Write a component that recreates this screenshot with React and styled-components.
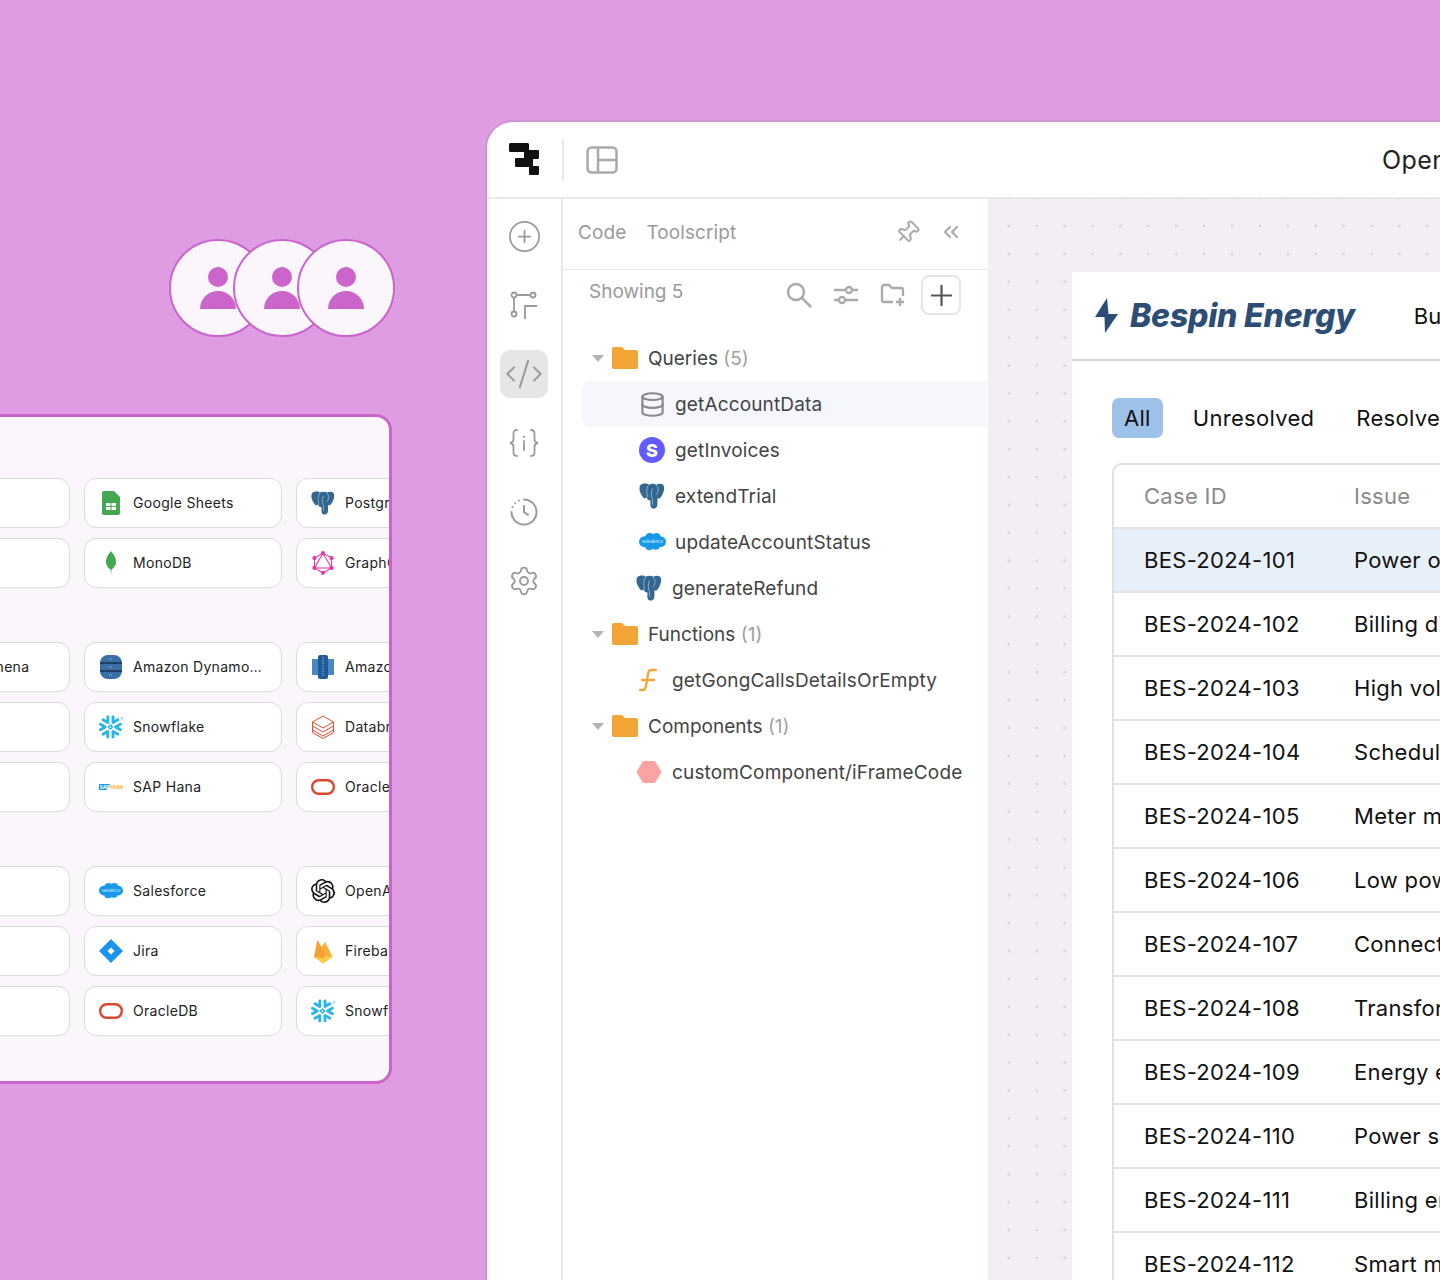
import React from 'react'
import styled, {createGlobalStyle} from 'styled-components'
import {CirclePlus, CodeXml, Database, Pin, ChevronsLeft, Plus, Settings} from 'lucide-react'
import {SiGraphql, SiSnowflake, SiOpenai} from 'react-icons/si'

const GlobalStyle = createGlobalStyle`
  html, body {
    margin: 0;
    padding: 0;
    background: #de9de3;
    font-family: Inter, "Noto Sans", sans-serif;
  }
`

const Page = styled.div`
  display: flex;
  width: 1440px;
  height: 1280px;
  overflow: hidden;
`

const LeftColumn = styled.div`
  flex: none;
  width: 485px;
  padding-top: 239px;
  box-sizing: border-box;
`

const Avatars = styled.div`
  display: flex;
  margin-left: 169px;
`

const Avatar = styled.div`
  flex: none;
  display: flex;
  align-items: center;
  justify-content: center;
  box-sizing: border-box;
  width: 98px;
  height: 98px;
  border: 2px solid #cb65cc;
  border-radius: 50%;
  background: #fbf5fc;
  & + & {
    margin-left: -34px;
  }
`

const Panel = styled.div`
  box-sizing: border-box;
  width: 534px;
  height: 670px;
  margin-top: 77px;
  margin-left: -142px;
  padding: 61px 0 0 11px;
  border: 3px solid #cb65cc;
  border-radius: 16px;
  background: #fbf5fc;
  overflow: hidden;
`

const CardGroup = styled.div`
  display: grid;
  grid-template-columns: repeat(3, 198px);
  gap: 10px 14px;
  margin-bottom: 54px;
`

const Card = styled.div`
  box-sizing: border-box;
  display: flex;
  align-items: center;
  height: 50px;
  padding-left: 13px;
  border: 1px solid #dcdadc;
  border-radius: 12px;
  background: #fff;
  white-space: nowrap;
`

const CardIcon = styled.span`
  flex: none;
  display: flex;
  align-items: center;
  justify-content: center;
  width: 26px;
  height: 26px;
  margin-right: 9px;
`

const CardLabel = styled.span`
  overflow: hidden;
  text-overflow: ellipsis;
  padding: 0 18px 1px 0;
  font-size: 14px;
  letter-spacing: 0.3px;
  color: #222;
`

const AppWindow = styled.div`
  flex: none;
  box-sizing: border-box;
  width: 1000px;
  height: 1170px;
  margin-top: 120px;
  border: 2px solid #cf93d3;
  border-bottom: none;
  border-radius: 28px 0 0 0;
  background: #fff;
  overflow: hidden;
`

const TopBar = styled.div`
  box-sizing: border-box;
  display: flex;
  align-items: center;
  height: 77px;
  padding-left: 22px;
  border-bottom: 2px solid #e8e8e8;
  & > svg {
    flex: none;
  }
`

const TopDivider = styled.div`
  flex: none;
  width: 2px;
  height: 42px;
  margin: 0 22px;
  background: #e8e8e8;
`

const PageTitle = styled.div`
  flex: none;
  margin-left: 764px;
  font-size: 25px;
  letter-spacing: 0.4px;
  color: #222;
  white-space: nowrap;
`

const Body = styled.div`
  display: flex;
  height: 1090px;
`

const SideBar = styled.div`
  flex: none;
  box-sizing: border-box;
  display: flex;
  flex-direction: column;
  align-items: center;
  gap: 21px;
  width: 76px;
  padding-top: 13px;
  border-right: 2px solid #e8e8e8;
`

const SideButton = styled.div`
  display: flex;
  align-items: center;
  justify-content: center;
  width: 48px;
  height: 48px;
  border-radius: 10px;
  color: #9a9a9a;
  background: ${props => (props.$active ? '#e6e6e6' : 'transparent')};
`

const CodePanel = styled.div`
  flex: none;
  width: 425px;
`

const TabsRow = styled.div`
  box-sizing: border-box;
  display: flex;
  align-items: center;
  gap: 20px;
  height: 71px;
  padding: 0 25px 4px 15px;
  border-bottom: 1px solid #e8e8e8;
`

const PanelTab = styled.span`
  font-size: 19px;
  letter-spacing: 0.1px;
  color: #9a9a9a;
`

const TabTools = styled.div`
  display: flex;
  align-items: center;
  gap: 19px;
  margin-left: auto;
  color: #aaa;
`

const FilterRow = styled.div`
  box-sizing: border-box;
  display: flex;
  align-items: flex-start;
  height: 65px;
  padding: 5px 27px 0 26px;
`

const ShowingLabel = styled.span`
  font-size: 19px;
  line-height: 34px;
  color: #9a9a9a;
`

const FilterTools = styled.div`
  display: flex;
  align-items: center;
  gap: 21px;
  margin-left: auto;
  color: #aaa;
`

const ToolCell = styled.span`
  display: flex;
  align-items: center;
  justify-content: center;
  width: 26px;
  height: 40px;
`

const AddButton = styled.span`
  box-sizing: border-box;
  display: flex;
  align-items: center;
  justify-content: center;
  width: 40px;
  height: 40px;
  margin-left: -6px;
  border: 2px solid #e6e6e6;
  border-radius: 8px;
  color: #555;
`

const Tree = styled.div`
  padding: 0 1px 0 19px;
`

const TreeRow = styled.div`
  display: flex;
  align-items: center;
  height: 46px;
  padding-left: ${props => props.$indent}px;
  border-radius: 8px 0 0 8px;
  background: ${props => (props.$selected ? '#f5f7fd' : 'transparent')};
  white-space: nowrap;
`

const Caret = styled.span`
  width: 0;
  height: 0;
  margin-right: 8px;
  border-left: 6px solid transparent;
  border-right: 6px solid transparent;
  border-top: 7px solid #b4b4b4;
`

const TreeIcon = styled.span`
  flex: none;
  display: flex;
  align-items: center;
  justify-content: center;
  width: 28px;
  height: 28px;
  margin-right: 9px;
`

const FolderLabel = styled.span`
  margin-left: 10px;
  font-size: 19px;
  color: #444;
`

const Count = styled.span`
  color: #a0a0a0;
`

const ItemLabel = styled.span`
  font-size: 19px;
  letter-spacing: 0.15px;
  color: #444;
`

const StripeBadge = styled.span`
  display: flex;
  align-items: center;
  justify-content: center;
  width: 26px;
  height: 26px;
  border-radius: 50%;
  background: #635bff;
  color: #fff;
  font-size: 18px;
  font-weight: 800;
`

const Canvas = styled.div`
  flex: 1;
  padding: 73px 0 0 84px;
  background-color: #f3eef4;
  background-image: radial-gradient(circle, #d6d2d7 1.5px, transparent 1.6px);
  background-size: 27.9px 27.9px;
  background-position: 7px 13px;
`

const AppCard = styled.div`
  height: 100%;
  background: #fff;
`

const AppHeader = styled.div`
  box-sizing: border-box;
  display: flex;
  align-items: center;
  height: 89px;
  padding-left: 23px;
  border-bottom: 2px solid #cfdae6;
  white-space: nowrap;
`

const BrandName = styled.span`
  margin-left: 11px;
  font-size: 32px;
  font-weight: 800;
  font-style: italic;
  letter-spacing: -0.2px;
  color: #2c4e76;
`

const NavItem = styled.span`
  margin-left: 59px;
  font-size: 22px;
  color: #111;
`

const FilterTabs = styled.div`
  display: flex;
  gap: 18px;
  padding: 37px 0 0 40px;
  white-space: nowrap;
`

const FilterTab = styled.span`
  display: flex;
  align-items: center;
  height: 40px;
  padding: 0 12px;
  border-radius: 7px;
  background: ${props => (props.$active ? '#9ec1ea' : 'transparent')};
  font-size: 22px;
  letter-spacing: 0.3px;
  color: #111;
`

const Table = styled.div`
  margin: 25px 0 0 40px;
  border: 2px solid #e0e0e0;
  border-right: none;
  border-bottom: none;
  border-radius: 10px 0 0 0;
`

const TableRow = styled.div`
  box-sizing: border-box;
  display: grid;
  grid-template-columns: 210px 1fr;
  align-items: center;
  height: 64px;
  padding-left: 30px;
  border-bottom: 2px solid #e3e3e3;
  background: ${props => (props.$selected ? '#e7eff8' : 'transparent')};
  font-size: 22px;
  letter-spacing: 0.3px;
  color: ${props => (props.$head ? '#8a8a8a' : '#111')};
  white-space: nowrap;
`

const UserIcon = () => (
  <svg width="36" height="42" viewBox="0 0 36 42">
    <circle cx="18" cy="10" r="10" fill="#cb65cc" />
    <path d="M0 42a18 18 0 0 1 36 0z" fill="#cb65cc" />
  </svg>
)

const SheetsIcon = () => (
  <svg width="18" height="24" viewBox="0 0 18 24">
    <path d="M2 0h10l6 6v16a2 2 0 0 1-2 2H2a2 2 0 0 1-2-2V2a2 2 0 0 1 2-2z" fill="#43a84f" />
    <path d="M4 12h10v7H4z" fill="#fff" />
    <path d="M9 12v7M4 15.5h10" stroke="#43a84f" />
  </svg>
)

const LeafIcon = () => (
  <svg width="12" height="24" viewBox="0 0 12 24">
    <path d="M6 0c2 3 5 6 5 11 0 4-3 6.500-4.500 7.500L6 24l-.5-5.500C4 17.500 1 15 1 11c0-5 3-8 5-11z" fill="#43a84f" />
  </svg>
)

const DynamoIcon = () => (
  <svg width="24" height="24" viewBox="0 0 24 24">
    <rect x="1" y="0" width="22" height="24" rx="8" fill="#3a6ea5" />
    <path d="M1 8h22M1 16h22" stroke="#1f3f66" strokeWidth="2" />
    <path d="M10 4h4M10 12h4M10 20h4" stroke="#7fa8d3" strokeWidth="1.500" strokeDasharray="1 1" />
  </svg>
)

const RedshiftIcon = () => (
  <svg width="24" height="24" viewBox="0 0 24 24">
    <rect x="1" y="4" width="6" height="16" fill="#4a86c0" />
    <rect x="17" y="4" width="6" height="16" fill="#4a86c0" />
    <rect x="7" y="0" width="10" height="24" rx="2" fill="#205b99" />
    <path d="M12 2v20" stroke="#6fa3d6" strokeWidth="1.500" strokeDasharray="1 1" />
  </svg>
)

const DatabricksIcon = () => (
  <svg width="24" height="24" viewBox="0 0 24 24" fill="none" stroke="#e8492f">
    <path d="M12 1l10.500 6L12 13 1.500 7z" />
    <path d="M1.500 7v4L12 17l10.500-6V7" />
    <path d="M1.500 11v4L12 21l10.500-6v-4" />
    <path d="M1.500 15v2.500L12 23.500l10.500-6V15" />
  </svg>
)

const OracleIcon = () => (
  <svg width="24" height="16" viewBox="0 0 24 16">
    <rect x="1.200" y="1.200" width="21.600" height="13.600" rx="6.500" fill="none" stroke="#d9472f" strokeWidth="2.400" />
  </svg>
)

const SapIcon = () => (
  <svg width="24" height="8" viewBox="0 0 24 8">
    <path d="M0 1h11L7.500 7H0z" fill="#1798e8" />
    <text x="0.800" y="5.800" fontSize="4.500" fontWeight="700" fill="#fff" fontFamily="Inter, sans-serif">SAP</text>
    <text x="10" y="6" fontSize="4.800" fontWeight="700" fill="#f7b733" fontFamily="Inter, sans-serif">HANA</text>
  </svg>
)

const JiraIcon = () => (
  <svg width="24" height="24" viewBox="0 0 24 24">
    <path d="M12 0l12 12-12 12L0 12z" fill="#1a95ee" />
    <path d="M12 8.500l3.500 3.500-3.500 3.500L8.500 12z" fill="#fff" />
  </svg>
)

const FirebaseIcon = () => (
  <svg width="20" height="25" viewBox="0 0 20 25">
    <path d="M1 18L4.500 1l4 7L12 3l7.500 15-9.500 6.500z" fill="#ffc843" />
    <path d="M1 18L4.500 1l4 7 4.500 8-3 3z" fill="#f2a035" />
    <path d="M12 3L8.500 8l4.500 8 6.500 2z" fill="#f7b03c" />
  </svg>
)

const SalesforceIcon = ({size = 24}) => (
  <svg width={size} height={size * 0.72} viewBox="0 0 25 18">
    <g fill="#1798e8">
      <circle cx="10" cy="5.500" r="4.500" />
      <circle cx="16" cy="5" r="4" />
      <circle cx="20" cy="9" r="5" />
      <circle cx="5" cy="9" r="5" />
      <circle cx="9.500" cy="13" r="4" />
      <circle cx="15.500" cy="12.500" r="4" />
    </g>
    <text x="12.500" y="10.500" fontSize="4" textAnchor="middle" fill="#d8efff" fontFamily="Inter, sans-serif">salesforce</text>
  </svg>
)

const SnowflakeIcon = () => <SiSnowflake size={24} color="#29b5e8" />

const PostgresIcon = ({size = 24}) => (
  <svg width={size} height={size} viewBox="0 0 24 24">
    <path
      d="M3 1c3-1 5 0 6 .5 2-1 5-1 7 0 2-1 6-1.500 7 1.500 1 4-2 10-4.500 11.500L17 14v6c0 3-3 4-4.500 3.500-2-.5-2-2.500-2-4.500v-3c-2 .5-3-1-3.500-3-1 2-2.500 1.500-3.500 0C1.500 10 0 7 .5 4 .7 2 2 1.200 3 1z"
      fill="#336791"
    />
    <path d="M8.500 2C6.500 6 7 10 8 13M16 2c2.500 3 2 7-.5 9M12.500 5c-1.500 3-1.500 8 0 10v5" fill="none" stroke="#d5e3ef" strokeWidth="0.500" />
  </svg>
)

const cardGroups = [
  [
    {},
    {label: 'Google Sheets', icon: <SheetsIcon />},
    {label: 'Postgres', icon: <PostgresIcon />},
    {},
    {label: 'MonoDB', icon: <LeafIcon />},
    {label: 'GraphQL', icon: <SiGraphql size={24} color="#e535ab" />},
  ],
  [
    {label: 'Amazon Athena'},
    {label: 'Amazon DynamoDB', icon: <DynamoIcon />},
    {label: 'Amazon Redshift', icon: <RedshiftIcon />},
    {},
    {label: 'Snowflake', icon: <SnowflakeIcon />},
    {label: 'Databricks', icon: <DatabricksIcon />},
    {},
    {label: 'SAP Hana', icon: <SapIcon />},
    {label: 'Oracle', icon: <OracleIcon />},
  ],
  [
    {},
    {label: 'Salesforce', icon: <SalesforceIcon />},
    {label: 'OpenAI', icon: <SiOpenai size={24} color="#111" />},
    {},
    {label: 'Jira', icon: <JiraIcon />},
    {label: 'Firebase', icon: <FirebaseIcon />},
    {},
    {label: 'OracleDB', icon: <OracleIcon />},
    {label: 'Snowflake', icon: <SnowflakeIcon />},
  ],
]

const RetoolLogo = () => (
  <svg width="31" height="33" viewBox="0 0 31 33" fill="#111">
    <rect x="0" y="0" width="20" height="9" rx="1.500" />
    <rect x="15" y="7" width="15" height="9" rx="1" />
    <rect x="6" y="15" width="18" height="9" rx="1" />
    <rect x="20" y="23" width="10" height="9" rx="1" />
  </svg>
)

const LayoutIcon = () => (
  <svg width="32" height="28" viewBox="0 0 32 28" fill="none" stroke="#aaa" strokeWidth="2.500">
    <rect x="1.500" y="1.500" width="29" height="25" rx="4" />
    <path d="M12 1.500v25M12 14h18.500" />
  </svg>
)

const RouteIcon = () => (
  <svg width="30" height="30" viewBox="0 0 30 30" fill="none" stroke="currentColor" strokeWidth="1.800">
    <circle cx="5" cy="5" r="2.500" />
    <circle cx="24" cy="5" r="2.500" />
    <circle cx="5" cy="24" r="2.500" />
    <path d="M7.500 5h14M5 7.500v14M16 29V16h12" />
  </svg>
)

const BracesIcon = () => (
  <svg width="32" height="30" viewBox="0 0 32 30" fill="none" stroke="currentColor" strokeWidth="1.800" strokeLinecap="round">
    <path d="M9 2C6 2 5.500 3.500 5.500 6v5.500C5.500 13.500 4.500 14.500 2 15c2.500.5 3.500 1.500 3.500 3.500V24c0 2.500.5 4 3.500 4" />
    <path d="M23 2c3 0 3.500 1.500 3.500 4v5.500c0 2 1 3 3.500 3.500-2.500.5-3.500 1.500-3.500 3.500V24c0 2.500-.5 4-3.500 4" />
    <path d="M16 13v9M16 8.500v.5" />
  </svg>
)

const ClockIcon = () => (
  <svg width="30" height="30" viewBox="0 0 30 30" fill="none" stroke="currentColor" strokeWidth="2" strokeLinecap="round">
    <path d="M15 2.500A12.500 12.500 0 1 1 2.500 15" />
    <path d="M3.500 10v.1M6.200 6.200v.1M10 3.500v.1" />
    <path d="M15 9v6l4 3" />
  </svg>
)

const SearchIcon = () => (
  <svg width="26" height="26" viewBox="0 0 26 26" fill="none" stroke="currentColor" strokeWidth="2.500" strokeLinecap="round">
    <circle cx="10" cy="10" r="8" />
    <path d="M16 16l8.500 8.500" />
  </svg>
)

const SlidersIcon = () => (
  <svg width="26" height="24" viewBox="0 0 26 24" fill="none" stroke="currentColor" strokeWidth="2.300">
    <path d="M1 7h12M19 7h6M1 17h5M12 17h13" />
    <circle cx="16" cy="7" r="3" />
    <circle cx="9" cy="17" r="3" />
  </svg>
)

const FolderAddIcon = () => (
  <svg width="26" height="26" viewBox="0 0 26 26" fill="none" stroke="currentColor" strokeWidth="2.300">
    <path d="M13 20H4a2 2 0 0 1-2-2V5a2 2 0 0 1 2-2h5l3 3h9a2 2 0 0 1 2 2v6" />
    <path d="M20 16v8M16 20h8" />
  </svg>
)

const FolderIcon = () => (
  <svg width="26" height="22" viewBox="0 0 26 22">
    <path d="M2 0h8l3 3h11a2 2 0 0 1 2 2v15a2 2 0 0 1-2 2H2a2 2 0 0 1-2-2V2a2 2 0 0 1 2-2z" fill="#f2a437" />
  </svg>
)

const FunctionIcon = () => (
  <svg width="20" height="24" viewBox="0 0 20 24" fill="none" stroke="#f2a437" strokeWidth="2.300" strokeLinecap="round">
    <path d="M1 22h3c2 0 2.500-1 3-4l2-12c.5-3 1-4 3-4h5" />
    <path d="M3 12h12" />
  </svg>
)

const HexIcon = () => (
  <svg width="26" height="24" viewBox="0 0 26 24">
    <path d="M7 1h12l6.500 11L19 23H7L.5 12z" fill="#f9a3a3" />
  </svg>
)

const sideButtons = [
  {key: 'add', icon: <CirclePlus size={35} strokeWidth={1.2} />},
  {key: 'route', icon: <RouteIcon />},
  {key: 'code', icon: <CodeXml size={40} strokeWidth={1.2} />, active: true},
  {key: 'state', icon: <BracesIcon />},
  {key: 'history', icon: <ClockIcon />},
  {key: 'settings', icon: <Settings size={32} strokeWidth={1.4} />},
]

const treeItems = [
  {type: 'folder', name: 'Queries', count: 5},
  {name: 'getAccountData', icon: <Database size={27} color="#8a8a8a" strokeWidth={1.9} />, selected: true},
  {name: 'getInvoices', icon: <StripeBadge>S</StripeBadge>},
  {name: 'extendTrial', icon: <PostgresIcon size={26} />},
  {name: 'updateAccountStatus', icon: <SalesforceIcon size={27} />},
  {name: 'generateRefund', icon: <PostgresIcon size={26} />, shift: 3},
  {type: 'folder', name: 'Functions', count: 1},
  {name: 'getGongCallsDetailsOrEmpty', icon: <FunctionIcon />, shift: 3},
  {type: 'folder', name: 'Components', count: 1},
  {name: 'customComponent/iFrameCode', icon: <HexIcon />, shift: 3},
]

const cases = [
  ['BES-2024-101', 'Power outage'],
  ['BES-2024-102', 'Billing dispute'],
  ['BES-2024-103', 'High voltage'],
  ['BES-2024-104', 'Scheduled'],
  ['BES-2024-105', 'Meter malfunction'],
  ['BES-2024-106', 'Low power'],
  ['BES-2024-107', 'Connection'],
  ['BES-2024-108', 'Transformer'],
  ['BES-2024-109', 'Energy efficiency'],
  ['BES-2024-110', 'Power surge'],
  ['BES-2024-111', 'Billing error'],
  ['BES-2024-112', 'Smart meter'],
]

const App = () => (
  <Page>
    <GlobalStyle />
    <LeftColumn>
      <Avatars>
        {[0, 1, 2].map(i => (
          <Avatar key={i}>
            <UserIcon />
          </Avatar>
        ))}
      </Avatars>
      <Panel>
        {cardGroups.map((group, g) => (
          <CardGroup key={g}>
            {group.map((card, c) => (
              <Card key={c}>
                <CardIcon>{card.icon}</CardIcon>
                {card.label && <CardLabel>{card.label}</CardLabel>}
              </Card>
            ))}
          </CardGroup>
        ))}
      </Panel>
    </LeftColumn>

    <AppWindow>
      <TopBar>
        <RetoolLogo />
        <TopDivider />
        <LayoutIcon />
        <PageTitle>Open Cases</PageTitle>
      </TopBar>
      <Body>
        <SideBar>
          {sideButtons.map(b => (
            <SideButton key={b.key} $active={b.active}>
              {b.icon}
            </SideButton>
          ))}
        </SideBar>
        <CodePanel>
          <TabsRow>
            <PanelTab>Code</PanelTab>
            <PanelTab>Toolscript</PanelTab>
            <TabTools>
              <Pin size={25} strokeWidth={1.9} style={{transform: 'rotate(45deg)'}} />
              <ChevronsLeft size={24} strokeWidth={2.2} />
            </TabTools>
          </TabsRow>
          <FilterRow>
            <ShowingLabel>Showing 5</ShowingLabel>
            <FilterTools>
              <ToolCell>
                <SearchIcon />
              </ToolCell>
              <ToolCell>
                <SlidersIcon />
              </ToolCell>
              <ToolCell>
                <FolderAddIcon />
              </ToolCell>
              <AddButton>
                <Plus size={33} strokeWidth={1.6} />
              </AddButton>
            </FilterTools>
          </FilterRow>
          <Tree>
            {treeItems.map(item =>
              item.type === 'folder' ? (
                <TreeRow key={item.name} $indent={10}>
                  <Caret />
                  <FolderIcon />
                  <FolderLabel>
                    {item.name} <Count>({item.count})</Count>
                  </FolderLabel>
                </TreeRow>
              ) : (
                <TreeRow key={item.name} $indent={56 - (item.shift || 0)} $selected={item.selected}>
                  <TreeIcon>{item.icon}</TreeIcon>
                  <ItemLabel>{item.name}</ItemLabel>
                </TreeRow>
              ),
            )}
          </Tree>
        </CodePanel>
        <Canvas>
          <AppCard>
            <AppHeader>
              <svg width="24" height="36" viewBox="0 0 24 36">
                <path d="M12 0L0 19h9.500L10 35l13-19h-9.500z" fill="#2c4e76" />
              </svg>
              <BrandName>Bespin Energy</BrandName>
              <NavItem>Business</NavItem>
            </AppHeader>
            <FilterTabs>
              <FilterTab $active>All</FilterTab>
              <FilterTab>Unresolved</FilterTab>
              <FilterTab>Resolved</FilterTab>
            </FilterTabs>
            <Table>
              <TableRow $head>
                <span>Case ID</span>
                <span>Issue</span>
              </TableRow>
              {cases.map(([id, issue], i) => (
                <TableRow key={id} $selected={i === 0}>
                  <span>{id}</span>
                  <span>{issue}</span>
                </TableRow>
              ))}
            </Table>
          </AppCard>
        </Canvas>
      </Body>
    </AppWindow>
  </Page>
)

export default App
